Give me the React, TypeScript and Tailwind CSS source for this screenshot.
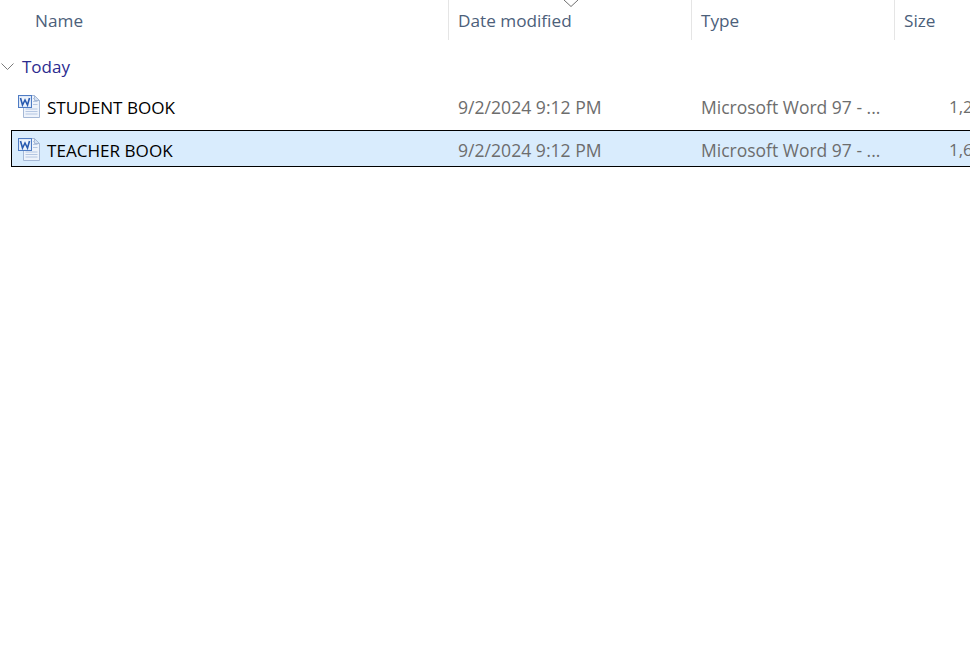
const FONT = "font-['Open_Sans','Noto_Sans',sans-serif]";

function WordIcon() {
  return (
    <svg width="24" height="24" viewBox="0 0 24 24" className="mb-[2px] shrink-0">
      <path d="M6.500 1.500H17.500L22.500 6.500V23.500H6.500Z" fill="#eef3fb" stroke="#a5b8d6" />
      <path d="M17.500 1.500V6.500H22.500Z" fill="#d5e1f2" stroke="#a5b8d6" />
      <path d="M16 4.500h2M16 7.500h4.500M16 10.500h4.500M8.500 15h12M8.500 17.500h12M8.500 20h12" stroke="#b4c6e2" />
      <rect x="1.500" y="1.500" width="13" height="12" fill="#dfe9f8" stroke="#4f7cc4" />
      <path d="M3 3h10v9H3Z" fill="#eef4fc" />
      <path d="M3.500 4 5.500 11 8 6 10.500 11 12.500 4" fill="none" stroke="#2a5bb0" strokeWidth="1.600" />
    </svg>
  );
}

function HeaderCell({ label, className }: { label: string; className: string }) {
  return (
    <div className={`flex h-10 items-center pt-[1px] text-[17.200px] text-[#4c607a] ${className}`}>
      {label}
    </div>
  );
}

function FileRow({ name, size, selected }: { name: string; size: string; selected?: boolean }) {
  return (
    <div
      className={`ml-[11px] flex h-[37px] w-[970px] items-center border pt-[3px] ${
        selected ? 'border-black bg-[#d9ecfd]' : 'border-transparent'
      }`}
    >
      <div className="flex w-[436px] shrink-0 items-center gap-[5px] pl-[5px] text-[17.100px] text-black">
        <WordIcon />
        <span className="pl-[1px] pt-[2px]">{name}</span>
      </div>
      <div className="w-[243px] shrink-0 pl-[10px] text-[17.600px] text-[#6d6d6d]">9/2/2024 9:12 PM</div>
      <div className="w-[203px] shrink-0 pl-[10px] text-[17.500px] text-[#6d6d6d]">Microsoft Word 97 - ...</div>
      <div className="pl-[55px] text-[17px] text-[#6d6d6d]">{size}</div>
    </div>
  );
}

export default function App() {
  return (
    <div className={`relative h-[645px] w-[970px] overflow-hidden bg-white ${FONT}`}>
      <svg width="16" height="8" viewBox="0 0 16 8" className="absolute left-[563px] top-0">
        <path d="M1 0 8 6.500 15 0" fill="none" stroke="#6f6f6f" />
      </svg>
      <div className="flex">
        <HeaderCell label="Name" className="w-[448px] pl-[35px]" />
        <HeaderCell label="Date modified" className="w-[243px] border-l border-[#e5e5e5] pl-[9px]" />
        <HeaderCell label="Type" className="w-[203px] border-l border-[#e5e5e5] pl-[9px]" />
        <HeaderCell label="Size" className="w-[75px] border-l border-[#e5e5e5] pl-[9px]" />
      </div>
      <div className="mt-[9px] flex h-[36px] items-center gap-[8px] pl-[1px] text-[17px] text-[#2b2b8f]">
        <svg width="13" height="8" viewBox="0 0 13 8">
          <path d="M.5.500 6.500 6.500 12.500.500" fill="none" stroke="#7a7a7a" />
        </svg>
        <span>Today</span>
      </div>
      <div className="mt-[2px] flex flex-col gap-[6px]">
        <FileRow name="STUDENT BOOK" size="1,2" />
        <FileRow name="TEACHER BOOK" size="1,6" selected />
      </div>
    </div>
  );
}
